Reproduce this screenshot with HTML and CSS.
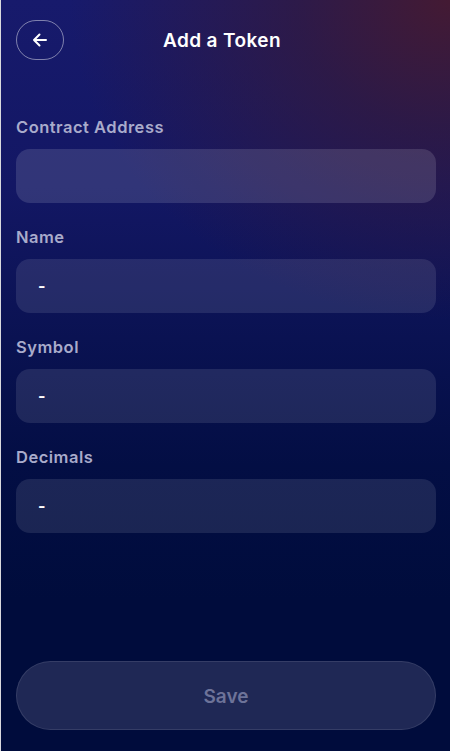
FILE: index.html
```html
<!DOCTYPE html>
<html>
<head>
<meta charset="utf-8">
<link rel="stylesheet" href="styles.css">
</head>
<body>
<div class="screen">
  <header class="header">
    <button class="back" aria-label="Back">
      <svg width="20" height="20" viewBox="0 0 20 20" fill="none" stroke="#fff" stroke-width="2" stroke-linecap="round" stroke-linejoin="round"><path d="M16 10H4M9.5 4.5L4 10l5.5 5.5"/></svg>
    </button>
    <h1 class="title">Add a Token</h1>
  </header>
  <form class="form">
    <div class="field">
      <label class="label">Contract Address</label>
      <div class="input input-active"></div>
    </div>
    <div class="field">
      <label class="label">Name</label>
      <div class="input">-</div>
    </div>
    <div class="field">
      <label class="label">Symbol</label>
      <div class="input">-</div>
    </div>
    <div class="field">
      <label class="label">Decimals</label>
      <div class="input">-</div>
    </div>
  </form>
  <div class="footer">
    <button class="save" type="button">Save</button>
  </div>
</div>
</body>
</html>
```
FILE: styles.css
```css
html, body {
  margin: 0;
  padding: 0;
  height: 100%;
}
body {
  background: #000c3c;
  font-family: "Inter", "Noto Sans", sans-serif;
}
.screen {
  box-sizing: border-box;
  height: 751px;
  border-left: 1px solid #d9d9de;
  display: flex;
  flex-direction: column;
  padding: 20px 14px 21px 15px;
  background:
    radial-gradient(ellipse 380px 320px at 100% 0%, rgba(70, 26, 48, 0.95) 0%, rgba(60, 26, 50, 0.6) 40%, rgba(40, 20, 60, 0) 100%),
    linear-gradient(180deg, #171a6c 0%, #131764 25%, #0a1252 45%, #030e44 62%, #000c3c 80%, #000c3c 100%);
}
.header {
  display: flex;
  align-items: center;
  height: 40px;
  position: relative;
}
.back {
  width: 48px;
  height: 40px;
  box-sizing: border-box;
  border: 1px solid rgba(255, 255, 255, 0.45);
  border-radius: 20px;
  background: transparent;
  display: flex;
  align-items: center;
  justify-content: center;
  padding: 0;
}
.title {
  position: absolute;
  left: 0;
  right: 0;
  margin: 0;
  text-align: center;
  font-size: 19px;
  font-weight: 600;
  letter-spacing: 0.4px;
  color: #fff;
  pointer-events: none;
  padding-right: 8px;
}
.form {
  display: flex;
  flex-direction: column;
  gap: 24px;
  margin-top: 57px;
}
.field {
  display: flex;
  flex-direction: column;
  gap: 12px;
}
.label {
  font-size: 16.5px;
  font-weight: 600;
  letter-spacing: 0.5px;
  color: #a9abcb;
  line-height: 20px;
}
.input {
  height: 54px;
  box-sizing: border-box;
  border-radius: 14px;
  background: rgba(255, 255, 255, 0.1);
  color: #fff;
  font-size: 16px;
  font-weight: 700;
  display: flex;
  align-items: center;
  padding-left: 22px;
}
.input-active {
  background: rgba(255, 255, 255, 0.13);
}
.footer {
  margin-top: auto;
}
.save {
  width: 100%;
  height: 69px;
  box-sizing: border-box;
  border-radius: 35px;
  border: 1px solid rgba(255, 255, 255, 0.1);
  background: #1f2855;
  color: #6d7399;
  font-family: "Inter", "Noto Sans", sans-serif;
  font-size: 19px;
  font-weight: 600;
  padding-top: 2px;
}
```
